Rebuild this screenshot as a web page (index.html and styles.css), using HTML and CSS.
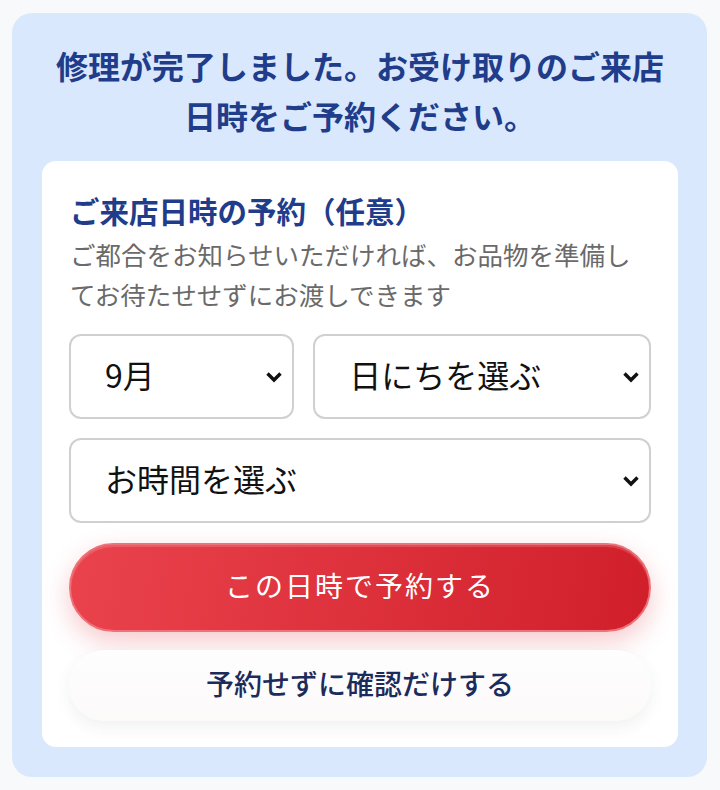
FILE: index.html
```html
<!DOCTYPE html>
<html lang="ja">
  <head>
    <meta charset="UTF-8" />
    <meta name="viewport" content="width=device-width, initial-scale=1.0" />
    <title>ご来店日時の予約</title>
    <link rel="stylesheet" href="styles.css">
  </head>
  <body>
    <div class="panel">
      <h2>修理が完了しました。お受け取りのご来店日時をご予約ください。</h2>

      <div class="card">
        <h3>ご来店日時の予約（任意）</h3>
        <p class="note">ご都合をお知らせいただければ、お品物を準備してお待たせせずにお渡しできます</p>

        <div class="date-row">
          <div class="field">
            <select id="month">
              <option>9月</option>
              <option>10月</option>
            </select>
            <svg class="chevron" viewBox="0 0 18 12"><path d="M2.5 2.5 9 9l6.5-6.5" /></svg>
          </div>
          <div class="field">
            <select id="day">
              <option>日にちを選ぶ</option>
            </select>
            <svg class="chevron" viewBox="0 0 18 12"><path d="M2.5 2.5 9 9l6.5-6.5" /></svg>
          </div>
        </div>

        <div class="field">
          <select id="time">
            <option>お時間を選ぶ</option>
          </select>
          <svg class="chevron" viewBox="0 0 18 12"><path d="M2.5 2.5 9 9l6.5-6.5" /></svg>
        </div>

        <button class="btn-primary">この日時で予約する</button>
        <button class="btn-secondary">予約せずに確認だけする</button>
      </div>
    </div>
  </body>
</html>
```

FILE: styles.css
```css
* {
  box-sizing: border-box;
}

body {
  margin: 0;
  padding: 13px 13px 13px 12px;
  font-family: "Noto Sans CJK JP", "Noto Sans", sans-serif;
  background: #f8f9fa;
}

.panel {
  background: #dae8fd;
  border-radius: 20px;
  padding: 27px 29px 30px 30px;
}

h2 {
  margin: 0 0 21px;
  text-align: center;
  font-size: 32px;
  line-height: 50px;
  font-weight: 700;
  color: #1f3d8b;
}

.card {
  background: white;
  border-radius: 14px;
  padding: 29px 27px 26px 27px;
  display: flex;
  flex-direction: column;
}

h3 {
  margin: 0;
  padding-left: 1px;
  font-size: 29.5px;
  line-height: 40px;
  font-weight: 700;
  color: #1f3d8b;
}

.note {
  margin: 4px 0 20px;
  padding-left: 1px;
  font-size: 25.5px;
  line-height: 40px;
  color: #6a6a6a;
}

.date-row {
  display: grid;
  grid-template-columns: 2fr 3fr;
  gap: 19px;
  margin-bottom: 19px;
}

.field {
  position: relative;
}

select {
  width: 100%;
  height: 85px;
  appearance: none;
  -webkit-appearance: none;
  background: white;
  border: 2px solid #d0d0d0;
  border-radius: 12px;
  padding: 0 40px 6px 34px;
  font-family: "Noto Sans CJK JP", "Noto Sans", sans-serif;
  font-size: 32px;
  color: #111;
}

.chevron {
  position: absolute;
  right: 11px;
  top: 50%;
  width: 18px;
  height: 12px;
  margin-top: -6px;
  fill: none;
  stroke: #111;
  stroke-width: 3.4;
  pointer-events: none;
}

button {
  width: 100%;
  border-radius: 999px;
  font-family: "Noto Sans CJK JP", "Noto Sans", sans-serif;
  font-size: 28px;
  cursor: pointer;
  padding: 0 0 6px;
}

.btn-primary {
  margin-top: 20px;
  height: 89px;
  color: white;
  font-weight: 400;
  letter-spacing: 2px;
  background: linear-gradient(100deg, #ea434d, #d01f2b);
  border: 2px solid #ee727a;
  box-shadow: inset 0 2px 0 rgba(255, 255, 255, 0.15),
    0 10px 26px rgba(225, 50, 60, 0.26);
}

.btn-secondary {
  margin-top: 18px;
  height: 71px;
  color: #1b2b5c;
  font-weight: 500;
  background: linear-gradient(#fefefe, #fcf9f9);
  border: none;
  box-shadow: 0 6px 16px rgba(40, 50, 80, 0.07);
}
```
